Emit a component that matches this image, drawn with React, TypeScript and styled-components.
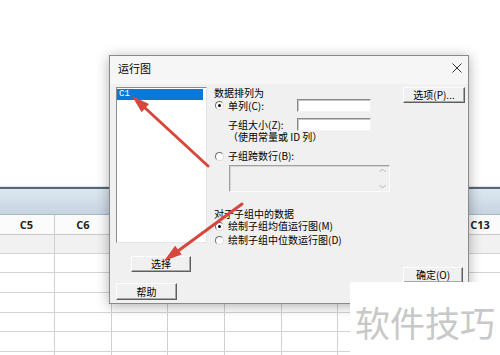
import React from "react";
import styled, { createGlobalStyle } from "styled-components";

const Global = createGlobalStyle`
  html, body { margin: 0; padding: 0; background: #fff; overflow: hidden; }
  #root { width: 500px; height: 355px; }
`;

const Page = styled.div`
  position: relative;
  width: 500px;
  height: 355px;
  overflow: hidden;
  background: #fff;
  font-family: "Noto Sans CJK SC", sans-serif;
`;

/* ---------- spreadsheet behind ---------- */
const Sheet = styled.div`
  padding-top: 187px;
`;

const Ribbon = styled.div`
  height: 25px;
  border-top: 2px solid #56687a;
  background: linear-gradient(#dde7f0, #c6d4e2);
  box-shadow: 0 -1px 0 #e2e5e8;
`;

const COLS = "56px 57px 56px 57px 57px 56px 57px 57px 57px";

const HeaderRow = styled.div`
  display: grid;
  grid-template-columns: ${COLS};
  margin-left: -1px;
  height: 21px;
  box-sizing: border-box;
  background: #fbfbfb;
  border-top: 1px solid #aab6c2;
  border-bottom: 1px solid #c8c8c8;
`;

const HeadCell = styled.div`
  display: flex;
  align-items: center;
  justify-content: center;
  border-right: 1px solid #cdcdcd;
  font-family: "Open Sans", "Noto Sans", sans-serif;
  font-weight: 700;
  font-size: 11px;
  color: #222;
`;

const DataRow = styled.div<{ $h: number; $shade?: boolean }>`
  display: grid;
  grid-template-columns: ${COLS};
  margin-left: -1px;
  height: ${(p) => p.$h}px;
  box-sizing: border-box;
  border-bottom: 1px solid #d4d4d4;
  background: ${(p) => (p.$shade ? "#f1f1f1" : "#fff")};
`;

const DataCell = styled.div`
  border-right: 1px solid #d0d0d0;
`;

/* ---------- dialog ---------- */
const Dialog = styled.div`
  position: absolute;
  left: 109px;
  top: 55px;
  width: 360px;
  height: 249px;
  box-sizing: border-box;
  border: 1px solid #8a8a8a;
  background: #f0f0f0;
  box-shadow: 0 2px 12px rgba(0, 0, 0, 0.32);
  display: flex;
  flex-direction: column;
  color: #000;
`;

const TitleBar = styled.div`
  height: 28px;
  box-sizing: border-box;
  padding: 0 0 4px 8px;
  display: flex;
  align-items: center;
  justify-content: space-between;
  background: #f6f6f6;
  font-size: 11px;
`;

const Close = styled.svg`
  width: 10px;
  height: 10px;
  margin-right: 6px;
`;

const Body = styled.div`
  flex: 1;
  display: flex;
  padding: 3px 3px 3px 6px;
`;

const LeftCol = styled.div`
  width: 91px;
  display: flex;
  flex-direction: column;
  align-items: flex-start;
`;

const ListBox = styled.div`
  width: 91px;
  height: 156px;
  box-sizing: border-box;
  background: #fff;
  border: 1px solid;
  border-color: #8c8c8c #e4e4e4 #e4e4e4 #8c8c8c;
  padding: 1px 3px 0 0;
`;

const ListItem = styled.div<{ $selected?: boolean }>`
  height: 11px;
  line-height: 11px;
  padding-left: 2px;
  font-family: "Liberation Mono", monospace;
  font-size: 9px;
  background: ${(p) => (p.$selected ? "#0a78d4" : "transparent")};
  color: ${(p) => (p.$selected ? "#fff" : "#000")};
`;

const Btn = styled.button<{ $w: number; $h?: number; $mt?: number; $ml?: number }>`
  width: ${(p) => p.$w}px;
  height: ${(p) => p.$h ?? 16}px;
  margin-top: ${(p) => p.$mt ?? 0}px;
  margin-left: ${(p) => p.$ml ?? 0}px;
  box-sizing: border-box;
  padding: 0;
  border: 1px solid;
  border-color: #fdfdfd #5e5e5e #5e5e5e #fdfdfd;
  box-shadow: inset -1px -1px 0 #a8a8a8;
  background: #f0f0f0;
  font-family: "Noto Sans CJK SC", sans-serif;
  font-size: 10px;
  line-height: 12px;
  color: #000;
`;

const MidCol = styled.div`
  width: 189px;
  margin-left: 7px;
  display: flex;
  flex-direction: column;
  font-size: 10px;
  line-height: 12px;
`;

const Label = styled.div<{ $mt?: number; $ml?: number }>`
  height: 12px;
  margin-top: ${(p) => p.$mt ?? 0}px;
  margin-left: ${(p) => p.$ml ?? 0}px;
  white-space: nowrap;
`;

const RadioRow = styled.div<{ $mt?: number; $h?: number }>`
  display: flex;
  align-items: center;
  height: ${(p) => p.$h ?? 12}px;
  margin-top: ${(p) => p.$mt ?? 0}px;
  white-space: nowrap;
`;

const Radio = styled.span<{ $on?: boolean }>`
  position: relative;
  width: 9px;
  height: 9px;
  box-sizing: border-box;
  margin: 0 4px 0 1px;
  border-radius: 50%;
  border: 1px solid;
  border-color: #6e6e6e #dcdcdc #dcdcdc #6e6e6e;
  background: #fff;
  &::after {
    content: "";
    display: ${(p) => (p.$on ? "block" : "none")};
    position: absolute;
    left: 2px;
    top: 2px;
    width: 3px;
    height: 3px;
    border-radius: 50%;
    background: #000;
  }
`;

const FieldRow = styled.div<{ $mt?: number }>`
  display: grid;
  grid-template-columns: 83px 74px;
  align-items: center;
  height: 13px;
  margin-top: ${(p) => p.$mt ?? 0}px;
  white-space: nowrap;
`;

const FieldLabel = styled.span<{ $indent?: number }>`
  display: flex;
  align-items: center;
  padding-left: ${(p) => p.$indent ?? 0}px;
`;

const TextInput = styled.div`
  width: 74px;
  height: 13px;
  box-sizing: border-box;
  background: #fff;
  border: 1px solid;
  border-color: #8a8a8a #f4f4f4 #f4f4f4 #8a8a8a;
  box-shadow: inset 1px 1px 0 #c4c4c4;
`;

const DisabledBox = styled.div`
  width: 161px;
  height: 27px;
  margin: 3px 0 0 15px;
  box-sizing: border-box;
  background: #f0f0f0;
  border: 1px solid;
  border-color: #a0a0a0 #fafafa #fafafa #a0a0a0;
  box-shadow: inset 1px 1px 0 #d6d6d6;
  display: flex;
  justify-content: flex-end;
`;

const Scroller = styled.div`
  width: 12px;
  padding: 2px 1px 2px 0;
  display: flex;
  flex-direction: column;
  justify-content: space-between;
  align-items: center;
`;

const RightCol = styled.div`
  width: 62px;
  display: flex;
  flex-direction: column;
  align-items: flex-start;
`;

/* ---------- overlays ---------- */
const Watermark = styled.div`
  position: absolute;
  left: 350px;
  top: 282px;
  width: 150px;
  height: 73px;
  box-sizing: border-box;
  padding: 6px 0 0 5px;
  background: #fff;
  display: flex;
  align-items: center;
  font-family: "Noto Sans CJK SC", sans-serif;
  font-size: 35px;
  color: #c8c8c8;
  white-space: nowrap;
`;

const ArrowLayer = styled.svg`
  position: absolute;
  left: 0;
  top: 0;
  width: 500px;
  height: 355px;
  pointer-events: none;
`;

const rowHeights = [19, 19, 20, 20, 19, 20, 20];
const headers = ["C5", "C6", "C7", "C8", "C9", "C10", "C11", "C12", "C13"];

const Chevron = ({ up }: { up?: boolean }) => (
  <svg width="7" height="5" viewBox="0 0 7 5">
    <path
      d={up ? "M0.5 4 L3.5 1 L6.5 4" : "M0.5 1 L3.5 4 L6.5 1"}
      fill="none"
      stroke="#b4b4b4"
      strokeWidth="1"
    />
  </svg>
);

export default function App() {
  return (
    <Page>
      <Global />
      <Sheet>
        <Ribbon />
        <HeaderRow>
          {headers.map((h) => (
            <HeadCell key={h}>{h}</HeadCell>
          ))}
        </HeaderRow>
        {rowHeights.map((h, i) => (
          <DataRow key={i} $h={h} $shade={i === 0}>
            {headers.map((c) => (
              <DataCell key={c} />
            ))}
          </DataRow>
        ))}
      </Sheet>

      <Dialog>
        <TitleBar>
          <span>运行图</span>
          <Close viewBox="0 0 10 10">
            <path d="M0.5 0.5 L9.5 9.5 M9.5 0.5 L0.5 9.5" stroke="#333" strokeWidth="1" />
          </Close>
        </TitleBar>
        <Body>
          <LeftCol>
            <ListBox>
              <ListItem $selected>C1</ListItem>
            </ListBox>
            <Btn $w={60} $h={16} $mt={13} $ml={15}>选择</Btn>
            <Btn $w={61} $h={17} $mt={11}>帮助</Btn>
          </LeftCol>

          <MidCol>
            <Label>数据排列为</Label>
            <FieldRow>
              <FieldLabel>
                <Radio $on />
                单列(C):
              </FieldLabel>
              <TextInput />
            </FieldRow>
            <FieldRow $mt={6}>
              <FieldLabel $indent={14}>子组大小(Z):</FieldLabel>
              <TextInput />
            </FieldRow>
            <Label $ml={14}>（使用常量或 ID 列）</Label>
            <RadioRow $mt={7}>
              <Radio />
              子组跨数行(B):
            </RadioRow>
            <DisabledBox>
              <Scroller>
                <Chevron up />
                <Chevron />
              </Scroller>
            </DisabledBox>
            <Label $mt={16}>对于子组中的数据</Label>
            <RadioRow>
              <Radio $on />
              绘制子组均值运行图(M)
            </RadioRow>
            <RadioRow $mt={2}>
              <Radio />
              绘制子组中位数运行图(D)
            </RadioRow>
          </MidCol>

          <RightCol>
            <Btn $w={62} $h={16}>选项(P)...</Btn>
            <Btn $w={60} $h={16} $mt={164}>确定(O)</Btn>
          </RightCol>
        </Body>
      </Dialog>

      <ArrowLayer viewBox="0 0 500 355">
        <g fill="#d8473c" stroke="#d8473c">
          <line x1="208" y1="166" x2="144" y2="107" strokeWidth="3" strokeLinecap="round" />
          <polygon points="132,96 149,104 141.6,112.3" stroke="none" />
          <line x1="242" y1="204" x2="178" y2="251" strokeWidth="3" strokeLinecap="round" />
          <polygon points="164,261 175.1,245.8 181.7,254.6" stroke="none" />
        </g>
      </ArrowLayer>

      <Watermark>软件技巧</Watermark>
    </Page>
  );
}
